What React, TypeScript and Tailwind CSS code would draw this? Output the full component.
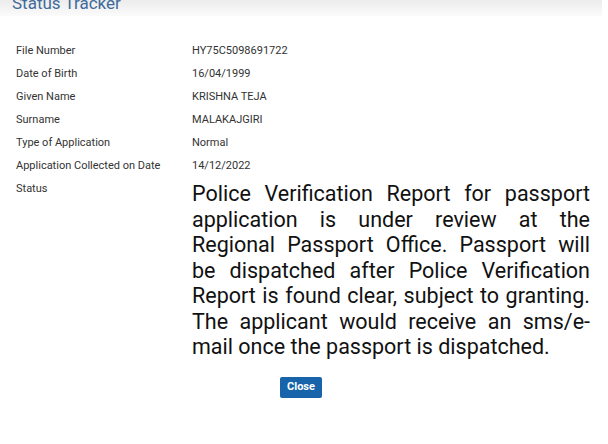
export default function App() {
  const rows: [string, string][] = [
    ["File Number", "HY75C5098691722"],
    ["Date of Birth", "16/04/1999"],
    ["Given Name", "KRISHNA TEJA"],
    ["Surname", "MALAKAJGIRI"],
    ["Type of Application", "Normal"],
    ["Application Collected on Date", "14/12/2022"],
  ];

  // status text laid out line by line to match the wrapping
  const statusLines = [
    "Police Verification Report for passport",
    "application is under review at the",
    "Regional Passport Office. Passport will",
    "be dispatched after Police Verification",
    "Report is found clear, subject to granting.",
    "The applicant would receive an sms/e-",
  ];

  return (
    <div className="w-[608px] h-[444px] bg-white overflow-hidden" style={{ fontFamily: "Roboto, sans-serif" }}>
      {/* Header */}
      <div className="w-[602px] h-[16px] bg-gradient-to-b from-[#ececec] to-[#fbfbfb] overflow-hidden">
        <div className="pl-[12px] -mt-[9px] text-[17px] leading-[24px] text-[#3f6a9c]">Status Tracker</div>
      </div>

      <div className="pt-[24px] px-[16px]">
        <table className="text-[11px] text-[#333]">
          <tbody>
            {rows.map(([label, value]) => (
              <tr key={label} className="h-[23px]">
                <td className="w-[176px] align-middle">{label}</td>
                <td className="align-middle">{value}</td>
              </tr>
            ))}
            <tr>
              <td className="align-top pt-[3px]">Status</td>
              <td className="align-top pt-[3px]">
                <div className="w-[398px] text-[21.5px] leading-[25.5px] text-[#111] text-justify">
                  {statusLines.map((line) => (
                    <div key={line} className="[text-align-last:justify] whitespace-nowrap">{line}</div>
                  ))}
                  <div>mail once the passport is dispatched.</div>
                </div>
              </td>
            </tr>
          </tbody>
        </table>

        <div className="flex justify-center pr-[6px] pt-[17px]">
          <button className="px-[7px] h-[21px] bg-[#1764aa] text-white text-[11px] font-bold rounded-[2px]">Close</button>
        </div>
      </div>
    </div>
  );
}
